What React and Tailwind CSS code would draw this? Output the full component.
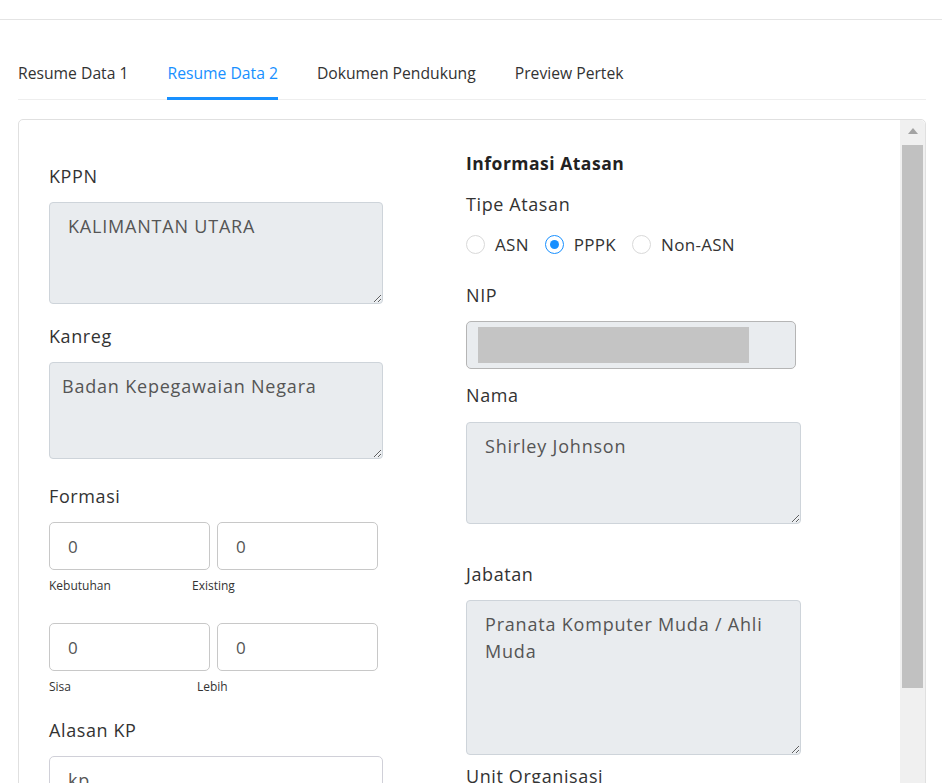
const font = { fontFamily: '"Open Sans", "Liberation Sans", sans-serif' };

const tabs = ['Resume Data 1', 'Resume Data 2', 'Dokumen Pendukung', 'Preview Pertek'];

const Label = ({ children, className = '' }) => (
  <div className={`text-[18px] leading-6 tracking-[0.6px] text-[#333] ${className}`}>{children}</div>
);

const ReadArea = ({ value, className = '', pad = 'px-[18px]' }) => (
  <textarea
    readOnly
    value={value}
    className={`block w-full resize-y rounded-[4px] border border-[#ced4da] bg-[#e9ecef] ${pad} py-[10px] text-[18px] leading-[27px] tracking-[0.8px] text-[#555] outline-none ${className}`}
  />
);

const NumInput = ({ value }) => (
  <input
    readOnly
    value={value}
    className="block h-[48px] w-full rounded-[5px] border border-[#c8c8c8] bg-white px-[18px] text-[17px] text-[#555] outline-none"
  />
);

const Radio = ({ label, checked }) => (
  <label className="flex items-center gap-[10px]">
    <span
      className={`flex h-[19px] w-[19px] items-center justify-center rounded-full border ${
        checked ? 'border-[#1890ff]' : 'border-[#d9d9d9]'
      } bg-white`}
    >
      {checked && <span className="h-[9px] w-[9px] rounded-full bg-[#1890ff]" />}
    </span>
    <span className="text-[17px] tracking-[0.3px] text-[#333]">{label}</span>
  </label>
);

export default function App() {
  return (
    <div className="h-[783px] overflow-hidden bg-white" style={font}>
      {/* top bar */}
      <div className="h-[20px] border-b border-[#e4e4e4]" />

      <div className="px-[18px] pr-[16px]">
        {/* tabs */}
        <div className="mt-[41px] flex border-b border-[#eeeeee]">
          {tabs.map((t, i) => (
            <div
              key={t}
              className={`mr-[39px] -mb-[1px] border-b-[3px] pb-[12px] text-[15.7px] leading-[24px] ${
                i === 1 ? 'border-[#1890ff] text-[#1890ff]' : 'border-transparent text-[#333]'
              }`}
            >
              {t}
            </div>
          ))}
        </div>

        {/* card */}
        <div className="mt-[19px] flex h-[700px] rounded-[5px] border border-[#e0e0e0]">
          <div className="flex flex-1 pl-[30px] pt-[44px]">
            {/* left column */}
            <div className="w-[334px]">
              <Label>KPPN</Label>
              <ReadArea value="KALIMANTAN UTARA" className="mt-[14px] h-[102px]" />

              <Label className="mt-[20px]">Kanreg</Label>
              <ReadArea value="Badan Kepegawaian Negara" pad="px-[12px]" className="mt-[14px] h-[97px]" />

              <Label className="mt-[25px]">Formasi</Label>
              <div className="mt-[14px] grid w-[329px] grid-cols-2 gap-[7px]">
                <NumInput value="0" />
                <NumInput value="0" />
              </div>
              <div className="mt-[8px] flex text-[12px] leading-4 text-[#333]">
                <span className="w-[143px]">Kebutuhan</span>
                <span>Existing</span>
              </div>

              <div className="mt-[29px] grid w-[329px] grid-cols-2 gap-[7px]">
                <NumInput value="0" />
                <NumInput value="0" />
              </div>
              <div className="mt-[8px] flex text-[12px] leading-4 text-[#333]">
                <span className="w-[148px]">Sisa</span>
                <span>Lebih</span>
              </div>

              <Label className="mt-[23px]">Alasan KP</Label>
              <textarea
                readOnly
                value="kp"
                className="mt-[14px] block h-[100px] w-full resize-y rounded-[5px] border border-[#d0d0d8] bg-white px-[18px] py-[10px] text-[18px] leading-[27px] tracking-[0.8px] text-[#555] outline-none"
              />
            </div>

            {/* right column */}
            <div className="ml-[83px] -mt-[13px] w-[335px]">
              <div className="text-[17.5px] font-bold leading-6 tracking-[0.5px] text-[#222]">Informasi Atasan</div>
              <Label className="mt-[17px]">Tipe Atasan</Label>
              <div className="mt-[16px] flex items-center gap-[16px]">
                <Radio label="ASN" />
                <Radio label="PPPK" checked />
                <Radio label="Non-ASN" />
              </div>

              <Label className="mt-[25px]">NIP</Label>
              <div className="mt-[14px] flex h-[48px] w-[330px] items-center rounded-[5px] border border-[#b5b5b5] bg-[#e9ecef] pl-[11px]">
                <div className="h-[36px] w-[271px] bg-[#c4c4c4]" />
              </div>

              <Label className="mt-[14px]">Nama</Label>
              <ReadArea value="Shirley Johnson" className="mt-[15px] h-[102px]" />

              <Label className="mt-[38px]">Jabatan</Label>
              <ReadArea value="Pranata Komputer Muda / Ahli Muda" className="mt-[14px] h-[155px]" />

              <Label className="mt-[9px]">Unit Organisasi</Label>
            </div>
          </div>

          {/* scrollbar */}
          <div className="flex w-[25px] flex-col items-center rounded-tr-[5px] bg-[#f0f0f0] pt-[8px]">
            <svg width="10" height="6" viewBox="0 0 10 6">
              <path d="M0 6 L5 0 L10 6 Z" fill="#a3a3a3" />
            </svg>
            <div className="mt-[11px] h-[543px] w-[21px] bg-[#c1c1c1]" />
          </div>
        </div>
      </div>
    </div>
  );
}
